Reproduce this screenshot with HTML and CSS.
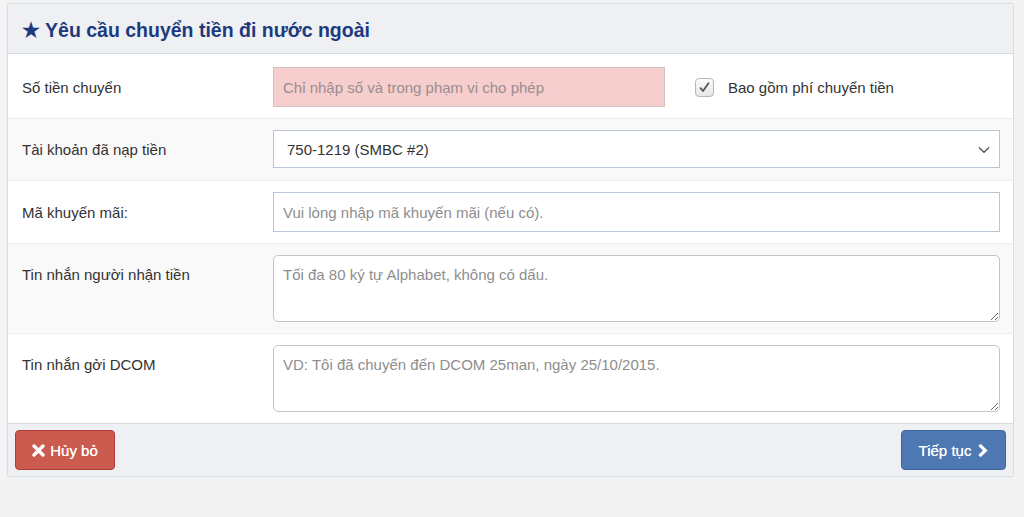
FILE: index.html
```html
<!DOCTYPE html>
<html lang="vi">
<head>
<meta charset="utf-8">
<link rel="stylesheet" href="styles.css">
</head>
<body>
<div class="panel">
  <div class="panel-head">
    <h1 class="title"><span class="star">★</span> Yêu cầu chuyển tiền đi nước ngoài</h1>
  </div>
  <div class="row row-first">
    <div class="label">Số tiền chuyển</div>
    <div class="field field-amount">
      <input class="input input-error" type="text" placeholder="Chỉ nhập số và trong phạm vi cho phép">
      <label class="check">
        <span class="checkbox">
          <svg width="13" height="13" viewBox="0 0 13 13"><path d="M2.5 7.2 L5 10 L10.5 2.2" fill="none" stroke="#555" stroke-width="1.8" stroke-linecap="round" stroke-linejoin="round"/></svg>
        </span>
        <span>Bao gồm phí chuyển tiền</span>
      </label>
    </div>
  </div>
  <div class="row alt">
    <div class="label">Tài khoản đã nạp tiền</div>
    <div class="field">
      <div class="select">
        <span>750-1219 (SMBC #2)</span>
        <svg class="caret" width="12" height="8" viewBox="0 0 12 8"><path d="M1 1.5 L6 6.3 L11 1.5" fill="none" stroke="#555" stroke-width="1.3"/></svg>
      </div>
    </div>
  </div>
  <div class="row">
    <div class="label">Mã khuyến mãi:</div>
    <div class="field">
      <input class="input input-blue" type="text" placeholder="Vui lòng nhập mã khuyến mãi (nếu có).">
    </div>
  </div>
  <div class="row alt row-top">
    <div class="label">Tin nhắn người nhận tiền</div>
    <div class="field">
      <textarea class="textarea" placeholder="Tối đa 80 ký tự Alphabet, không có dấu."></textarea>
    </div>
  </div>
  <div class="row row-top">
    <div class="label">Tin nhắn gởi DCOM</div>
    <div class="field">
      <textarea class="textarea" placeholder="VD: Tôi đã chuyển đến DCOM 25man, ngày 25/10/2015."></textarea>
    </div>
  </div>
  <div class="panel-foot">
    <button class="btn btn-danger"><svg class="x" width="13" height="13" viewBox="0 0 13 13"><path d="M2 2 L11 11 M11 2 L2 11" stroke="#fff" stroke-width="3.4" stroke-linecap="round"/></svg>Hủy bỏ</button>
    <button class="btn btn-primary">Tiếp tục <svg class="chev" width="11" height="15" viewBox="0 0 11 15"><path d="M2.5 1.8 L8.3 7.5 L2.5 13.2" fill="none" stroke="#fff" stroke-width="3.2" stroke-linejoin="miter"/></svg></button>
  </div>
</div>
</body>
</html>
```
FILE: styles.css
```css
html, body {
  margin: 0;
  padding: 0;
}
body {
  background: #f3f3f3;
  font-family: "Liberation Sans", Arial, sans-serif;
  font-size: 15px;
  color: #333;
  height: 517px;
  overflow: hidden;
}
.panel {
  margin: 3px 10px 0 7px;
  background: #fff;
  border: 1px solid #d7dde4;
  border-radius: 3px;
  box-shadow: 0 0 2px rgba(0,0,0,0.06);
}
.panel-head {
  background: #eef0f3;
  border-bottom: 1px solid #d3dbe4;
  height: 49px;
  display: flex;
  align-items: center;
  padding: 0 14px;
}
.title {
  margin: 0;
  font-size: 19.5px;
  font-weight: bold;
  color: #1d3a7e;
  padding-top: 3px;
}
.star {
  font-size: 20px;
}
.row {
  display: flex;
  align-items: center;
  padding: 11px 13px 11px 14px;
  border-top: 1px solid #eceef0;
}
.row-first {
  border-top: none;
  padding-top: 13px;
  padding-bottom: 11px;
}
.row-top {
  align-items: flex-start;
}
.row-top .label {
  padding-top: 11px;
}
.alt {
  background: #f9f9f9;
}
.label {
  width: 251px;
  flex: none;
}
.field {
  flex: 1;
  display: flex;
  align-items: center;
}
.input {
  box-sizing: border-box;
  height: 40px;
  width: 100%;
  font-family: inherit;
  font-size: 15px;
  padding: 0 9px;
  border: 1px solid #b9c6d6;
  border-radius: 0;
  outline: none;
  background: #fff;
}
.input::placeholder, .textarea::placeholder {
  color: #8e8e8e;
}
.input-error {
  width: 392px;
  flex: none;
  background: #f6cece;
  border-color: #d2c2c4;
}
.input-error::placeholder {
  color: #9a8d8e;
}
.check {
  display: flex;
  align-items: center;
  margin-left: 30px;
  gap: 14px;
  padding-top: 1px;
}
.checkbox {
  box-sizing: border-box;
  width: 19px;
  height: 19px;
  border: 1px solid #b8b8b8;
  border-radius: 4px;
  background: linear-gradient(#fbfbfb, #e6e6e6);
  display: flex;
  align-items: center;
  justify-content: center;
}
.select {
  box-sizing: border-box;
  width: 100%;
  height: 38px;
  margin-bottom: 1px;
  border: 1px solid #b9c6d6;
  background: #fff;
  display: flex;
  align-items: center;
  justify-content: space-between;
  padding: 0 9px 0 13px;
}
.caret {
  margin-top: 1px;
}
.textarea {
  box-sizing: border-box;
  width: 100%;
  height: 67px;
  font-family: inherit;
  font-size: 15px;
  padding: 10px 9px;
  border: 1px solid #c4c4c4;
  border-radius: 5px;
  resize: vertical;
  outline: none;
  background: #fff;
  display: block;
}
.panel-foot {
  background: #eef0f3;
  border-top: 1px solid #d3dbe4;
  padding: 6px 7px;
  display: flex;
  justify-content: space-between;
}
.btn {
  height: 40px;
  font-family: inherit;
  font-size: 15px;
  font-weight: normal;
  color: #fff;
  border-radius: 4px;
  display: flex;
  align-items: center;
  justify-content: center;
  gap: 5px;
  padding: 0;
  text-shadow: 0 0 0.4px #fff;
}
.btn-danger {
  width: 100px;
  background: #cb5a4f;
  border: 1px solid #b03d36;
}
.btn-primary {
  width: 105px;
  background: #4e78b2;
  border: 1px solid #3e67a0;
  gap: 6px;
}
.x {
  margin-top: 1px;
}
.chev {
  margin-top: 1px;
}
```
